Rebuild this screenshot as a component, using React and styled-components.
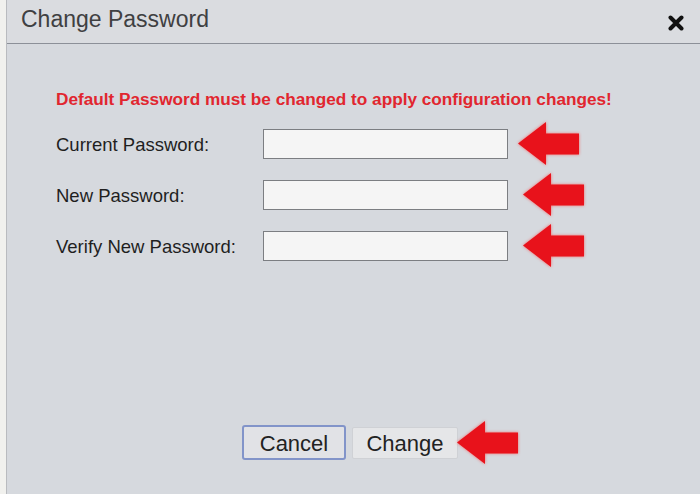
import React from 'react';
import styled, { createGlobalStyle } from 'styled-components';

const GlobalStyle = createGlobalStyle`
  html, body {
    margin: 0;
    padding: 0;
    width: 700px;
    height: 494px;
    overflow: hidden;
    background: #efefec;
    font-family: "Liberation Sans", Arial, sans-serif;
  }
`;

const Page = styled.div`
  display: flex;
  width: 700px;
  height: 494px;
`;

const Backdrop = styled.div`
  width: 6px;
  flex: none;
  background: #f1f1ee;
  border-right: 1px solid #b9bbbf;
`;

const Dialog = styled.div`
  flex: 1;
  display: flex;
  flex-direction: column;
  background: #d6d9de;
`;

const TitleBar = styled.div`
  height: 44px;
  box-sizing: border-box;
  display: flex;
  justify-content: space-between;
  align-items: flex-start;
  padding: 6px 16px 0 14px;
  background: #dadce0;
  border-bottom: 1px solid #8c9098;
`;

const Title = styled.h1`
  margin: 0;
  font-size: 23px;
  line-height: 26px;
  font-weight: normal;
  color: #3f4042;
`;

const Close = styled.button`
  margin-top: 9px;
  width: 16px;
  height: 16px;
  padding: 0;
  border: none;
  background: none;
  cursor: pointer;
  display: flex;
`;

const Body = styled.div`
  display: flex;
  flex-direction: column;
  padding: 45px 0 0 49px;
`;

const Message = styled.p`
  margin: 0 0 9px 0;
  font-size: 17.2px;
  line-height: 20px;
  font-weight: bold;
  color: #e1262f;
`;

const Row = styled.div`
  display: flex;
  align-items: center;
  height: 51px;
`;

const Label = styled.label`
  width: 207px;
  flex: none;
  padding-top: 3px;
  font-size: 18.5px;
  color: #1f1f1f;
`;

const Input = styled.input`
  width: 245px;
  height: 30px;
  box-sizing: border-box;
  border: 1px solid #7c7e82;
  background: #f5f5f5;
  outline: none;
`;

const ArrowMark = styled.svg`
  flex: none;
  margin-left: ${(p) => p.$offset}px;
  filter: drop-shadow(0 0 1.5px rgba(255, 60, 60, 0.7));
`;

const Footer = styled.div`
  display: flex;
  align-items: center;
  margin: 150px 0 0 186px;
`;

const Button = styled.button`
  height: 32px;
  padding: 2px 12px 0;
  font-family: "Liberation Sans", Arial, sans-serif;
  font-size: 22px;
  color: #222;
  background: #e3e4e6;
  border: 1px solid #cfd1d5;
  border-radius: 2px;
  cursor: pointer;
`;

const CancelButton = styled(Button)`
  height: 35px;
  width: 104px;
  margin-right: 6px;
  background: #e1e2e6;
  border: 2px solid #8294c9;
  border-radius: 3px;
`;

const ChangeButton = styled(Button)`
  width: 106px;
  background: #e5e6e8;
`;

function Arrow({ offset = 10 }) {
  return (
    <ArrowMark $offset={offset} width="61" height="43" viewBox="0 0 61 43">
      <path d="M0 21.5 L28 0 L28 11.5 L61 11.5 L61 32.5 L28 32.5 L28 43 Z" fill="#e8121b" />
    </ArrowMark>
  );
}

const fields = [
  { label: 'Current Password:', offset: 10 },
  { label: 'New Password:', offset: 15 },
  { label: 'Verify New Password:', offset: 15 },
];

export default function App() {
  return (
    <>
      <GlobalStyle />
      <Page>
        <Backdrop />
        <Dialog>
          <TitleBar>
            <Title>Change Password</Title>
            <Close aria-label="Close">
              <svg width="16" height="16" viewBox="0 0 16 16">
                <path d="M2.5 2.5 L13.5 13.5 M13.5 2.5 L2.5 13.5" stroke="#111" strokeWidth="4" strokeLinecap="round" />
              </svg>
            </Close>
          </TitleBar>
          <Body>
            <Message>Default Password must be changed to apply configuration changes!</Message>
            {fields.map((f) => (
              <Row key={f.label}>
                <Label>{f.label}</Label>
                <Input type="password" />
                <Arrow offset={f.offset} />
              </Row>
            ))}
            <Footer>
              <CancelButton>Cancel</CancelButton>
              <ChangeButton>Change</ChangeButton>
              <Arrow offset={-1} />
            </Footer>
          </Body>
        </Dialog>
      </Page>
    </>
  );
}
